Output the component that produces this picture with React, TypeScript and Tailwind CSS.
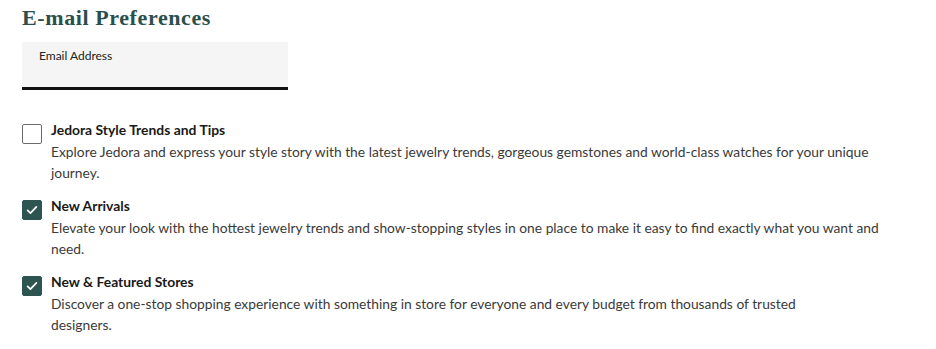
import React, { useState } from 'react';

type Pref = {
  id: string;
  title: string;
  lines: string[];
  checked: boolean;
};

const prefs: Pref[] = [
  {
    id: 'trends',
    title: 'Jedora Style Trends and Tips',
    lines: [
      'Explore Jedora and express your style story with the latest jewelry trends, gorgeous gemstones and world-class watches for your unique',
      'journey.',
    ],
    checked: false,
  },
  {
    id: 'arrivals',
    title: 'New Arrivals',
    lines: [
      'Elevate your look with the hottest jewelry trends and show-stopping styles in one place to make it easy to find exactly what you want and',
      'need.',
    ],
    checked: true,
  },
  {
    id: 'stores',
    title: 'New & Featured Stores',
    lines: [
      'Discover a one-stop shopping experience with something in store for everyone and every budget from thousands of trusted',
      'designers.',
    ],
    checked: true,
  },
];

const CheckBox: React.FC<{ checked: boolean; onClick: () => void }> = ({ checked, onClick }) => (
  <button
    type="button"
    onClick={onClick}
    className={`mt-[1px] flex h-[20px] w-[20px] shrink-0 items-center justify-center rounded-[2px] border ${
      checked ? 'border-[#2d5450] bg-[#2d5450]' : 'border-[#6b6b6b] bg-white'
    }`}
  >
    {checked && (
      <svg viewBox="0 0 16 16" className="h-[14px] w-[14px]" fill="none">
        <path d="M3 8.5l3.2 3L13 4.5" stroke="#fff" strokeWidth="2" strokeLinecap="round" strokeLinejoin="round" />
      </svg>
    )}
  </button>
);

export default function App() {
  const [state, setState] = useState<Record<string, boolean>>(
    Object.fromEntries(prefs.map((p) => [p.id, p.checked]))
  );

  return (
    <div className="h-[349px] w-[936px] bg-white px-[22px] pt-[4px] font-['Lato','Noto_Sans',sans-serif] text-[#333]">
      <h1 className="font-['Liberation_Serif',serif] text-[22px] font-bold leading-[28px] tracking-[0.6px] text-[#2b504b]">
        E-mail Preferences
      </h1>

      <div className="mt-[10px] h-[48px] w-[266px] border-b-[3px] border-[#111] bg-[#f5f5f5] pl-[17px] pt-[7px]">
        <label className="block text-[12px] leading-[14px] text-[#222]">Email Address</label>
      </div>

      <div className="mt-[33px] flex flex-col gap-[16px]">
        {prefs.map((p) => (
          <div key={p.id} className="flex gap-[9px]">
            <CheckBox
              checked={state[p.id]}
              onClick={() => setState((s) => ({ ...s, [p.id]: !s[p.id] }))}
            />
            <div>
              <div className="text-[13.9px] font-bold leading-[14px] text-[#1a1a1a]">{p.title}</div>
              <div className="mt-[4px] text-[13.8px] leading-[21px] text-[#3a3a3a]">
                {p.lines.map((l, i) => (
                  <div key={i} className="whitespace-nowrap">
                    {l}
                  </div>
                ))}
              </div>
            </div>
          </div>
        ))}
      </div>
    </div>
  );
}
